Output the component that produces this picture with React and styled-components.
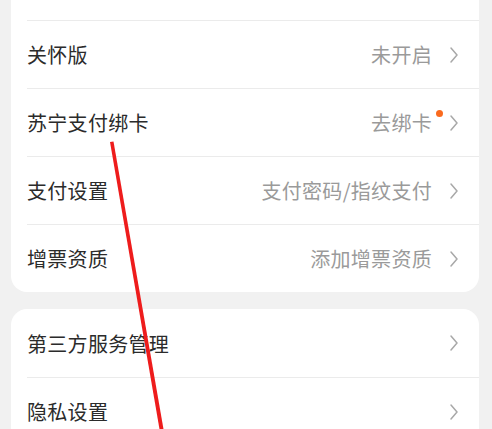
import React from "react";
import styled, { createGlobalStyle } from "styled-components";

const Global = createGlobalStyle`
  html, body { margin: 0; padding: 0; background: #f1f1f1; }
  body { font-family: "Noto Sans CJK SC", "Noto Sans", sans-serif; overflow: hidden; }
`;

const Page = styled.div`
  position: relative;
  width: 492px;
  height: 429px;
  overflow: hidden;
  background: #f1f1f1;
  padding: 0 13px 0 11px;
  box-sizing: border-box;
  display: flex;
  flex-direction: column;
  gap: 17px;
`;

const Card = styled.div`
  background: #fff;
  border-radius: 16px;
  margin-top: ${(p) => p.$offset || 0}px;
  flex-shrink: 0;
`;

const Row = styled.div`
  height: 68px;
  margin-left: 16px;
  padding-right: 20px;
  box-sizing: border-box;
  display: flex;
  align-items: center;
  border-top: ${(p) => (p.$first ? "none" : "1px solid #ebebeb")};
`;

const Label = styled.div`
  flex: 1;
  font-size: 20px;
  color: #2b2b2b;
  letter-spacing: 0.3px;
`;

const Value = styled.div`
  font-size: 20px;
  color: #9a9a9a;
  letter-spacing: 0.3px;
  margin-right: ${(p) => (p.$dot ? 4 : 17)}px;
`;

const Dot = styled.span`
  width: 7px;
  height: 7px;
  border-radius: 50%;
  background: #fa6a1e;
  align-self: flex-start;
  margin-top: 21px;
  margin-right: 6px;
`;

const Chevron = () => (
  <svg width="10" height="18" viewBox="0 0 10 18" style={{ display: "block" }}>
    <path d="M2 2 L8 9 L2 16" fill="none" stroke="#a8a8a8" strokeWidth="1.5" strokeLinecap="round" strokeLinejoin="round" />
  </svg>
);

const Overlay = styled.svg`
  position: absolute;
  left: 0;
  top: 0;
  pointer-events: none;
`;

const Item = ({ label, value, dot, first }) => (
  <Row $first={first}>
    <Label>{label}</Label>
    {value && <Value $dot={dot}>{value}</Value>}
    {!value && <Value />}
    {dot && <Dot />}
    <Chevron />
  </Row>
);

export default function App() {
  return (
    <>
      <Global />
      <Page>
        <Card $offset={-48}>
          <Item first label="" value="" />
          <Item label="关怀版" value="未开启" />
          <Item label="苏宁支付绑卡" value="去绑卡" dot />
          <Item label="支付设置" value="支付密码/指纹支付" />
          <Item label="增票资质" value="添加增票资质" />
        </Card>
        <Card>
          <Item first label="第三方服务管理" />
          <Item label="隐私设置" />
        </Card>
        <Overlay width="492" height="429" viewBox="0 0 492 429">
          <path d="M110 142 L113.5 141.5 L164 432 L160 432 Z" fill="#ee1c1c" />
        </Overlay>
      </Page>
    </>
  );
}
